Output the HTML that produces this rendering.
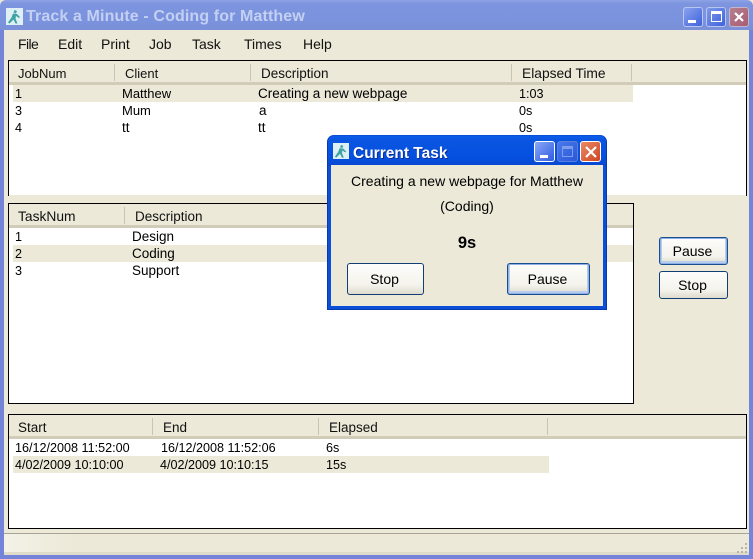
<!DOCTYPE html>
<html><head><meta charset="utf-8"><style>
html,body{margin:0;padding:0;background:#ece9d8;}
#p{position:relative;width:753px;height:559px;overflow:hidden;background:#ece9d8;font-family:"Liberation Sans",sans-serif;font-size:13.5px;color:#000;}
#p div{position:absolute;box-sizing:border-box;}
.t{white-space:nowrap;line-height:17px;height:17px;margin-top:1px;}
.t.n{font-size:12.6px;margin-top:2px;}
.h{white-space:nowrap;line-height:17px;height:17px;color:#111;margin-top:1px;}
.d{white-space:nowrap;line-height:17px;height:17px;font-size:14px;left:331px;width:272px;text-align:center;}
.m{white-space:nowrap;line-height:18px;top:35px;font-size:14px;color:#111;}
.box{background:#fff;border:1px solid #000;}
.hd{background:#ece9d8;left:0;top:0;height:24px;border-bottom:3px solid #d0ccb8;}
.sep{width:1px;top:3px;height:17px;background:#c8c5b4;border-right:0;}
.hl{background:#ece9d8;height:17px;}
.btn{background:linear-gradient(#fdfdfb,#f4f3ec 70%,#dedbcd);border:1px solid #0f3f73;border-radius:3px;text-align:center;font-size:14px;padding-right:2px;}
.def{box-shadow:inset 0 0 0 1px #8fb0e6,inset 0 -1px 0 2px #b8cdee;border-color:#1a4f8f;}
.tb{border-radius:3px;border:1px solid #fff;}
</style></head><body>
<div id="p">
<!-- main frame -->
<div style="left:0;top:0;width:753px;height:30px;background:linear-gradient(#8ea2e6 0,#7d95df 12%,#7b93de 60%,#7a90d8 100%);border-radius:6px 6px 0 0"></div>
<div style="left:0;top:30px;width:4px;height:529px;background:#7484d8"></div>
<div style="left:749px;top:30px;width:4px;height:529px;background:#7484d8"></div>
<div style="left:0;top:555px;width:753px;height:4px;background:#7484d8"></div>

<svg style="position:absolute;left:6px;top:8px" width="17" height="17" viewBox="0 0 17 17"><rect width="17" height="17" fill="#dff0f4"/><path d="M8.500 2l2.500 1-1 2.500-2.500-1zM7 5.500l4 .5 3 3-1 1-3-2-.5 2.500 2 5h-2l-2-4-4 4-1.500-1 3.500-5z" fill="#3fa3a6"/></svg>
<div style="left:26px;top:7px;font-size:16px;line-height:20px;font-weight:bold;color:#c4d0f2;white-space:nowrap;letter-spacing:.12px">Track a Minute - Coding for Matthew</div>

<!-- main title buttons -->
<div class="tb" style="left:683px;top:7px;width:20px;height:20px;background:linear-gradient(135deg,#8aa2ee,#3f62dc);border-color:#b8c6f0"><div style="left:4px;top:12px;width:8px;height:3px;background:#fff"></div></div>
<div class="tb" style="left:706px;top:7px;width:20px;height:20px;background:linear-gradient(135deg,#7f98ea,#3f62dc);border-color:#b8c6f0"><div style="left:4px;top:3px;width:11px;height:11px;border:1px solid #fff;border-top:3px solid #fff"></div></div>
<div class="tb" style="left:729px;top:7px;width:20px;height:20px;background:linear-gradient(135deg,#b5808e,#a85c74);border-color:#c8b4c8"><svg style="position:absolute;left:2px;top:2px" width="14" height="14"><path d="M3 3L11 11M11 3L3 11" stroke="#fff" stroke-width="2.200" fill="none"/></svg></div>

<!-- menu -->
<div class="m" style="left:18px;letter-spacing:-.6px">File</div>
<div class="m" style="left:58px">Edit</div>
<div class="m" style="left:101px">Print</div>
<div class="m" style="left:149px">Job</div>
<div class="m" style="left:192px">Task</div>
<div class="m" style="left:244px">Times</div>
<div class="m" style="left:303px">Help</div>

<!-- table 1 -->
<div class="box" style="left:8px;top:60px;width:739px;height:136px"></div>
<div class="hd" style="left:9px;top:61px;width:737px"></div>
<div class="sep" style="left:114px;top:64px"></div><div class="sep" style="left:250px;top:64px"></div><div class="sep" style="left:511px;top:64px"></div><div class="sep" style="left:631px;top:64px"></div>
<div class="h" style="left:18px;top:64px;font-size:13px">JobNum</div><div class="h" style="left:125px;top:64px;font-size:13px">Client</div><div class="h" style="left:261px;top:64px">Description</div><div class="h" style="left:522px;top:64px;font-size:13.800px">Elapsed Time</div>
<div class="hl" style="left:13px;top:85px;width:620px"></div>
<div class="t n" style="left:15px;top:84px">1</div><div class="t" style="left:122px;top:84px;font-size:13px">Matthew</div><div class="t" style="left:258px;top:84px">Creating a new webpage</div><div class="t n" style="left:519px;top:84px">1:03</div>
<div class="t n" style="left:15px;top:101px">3</div><div class="t" style="left:122px;top:101px;font-size:13px">Mum</div><div class="t" style="left:259px;top:101px">a</div><div class="t n" style="left:519px;top:101px">0s</div>
<div class="t n" style="left:15px;top:118px">4</div><div class="t" style="left:122px;top:118px">tt</div><div class="t" style="left:258px;top:118px">tt</div><div class="t n" style="left:519px;top:118px">0s</div>
<div style="left:9px;top:195px;width:737px;height:8px;background:#ece9d8"></div>

<!-- table 2 -->
<div class="box" style="left:8px;top:203px;width:626px;height:201px"></div>
<div class="hd" style="left:9px;top:204px;width:624px"></div>
<div class="sep" style="left:124px;top:207px"></div>
<div class="h" style="left:18px;top:207px;font-size:13.800px">TaskNum</div><div class="h" style="left:135px;top:207px">Description</div>
<div class="hl" style="left:13px;top:245px;width:620px"></div>
<div class="t n" style="left:15px;top:227px">1</div><div class="t" style="left:132px;top:227px">Design</div>
<div class="t n" style="left:15px;top:244px">2</div><div class="t" style="left:132px;top:244px">Coding</div>
<div class="t n" style="left:15px;top:261px">3</div><div class="t" style="left:132px;top:261px">Support</div>

<!-- side buttons -->
<div class="btn def" style="left:659px;top:237px;width:69px;height:28px;line-height:27px">Pause</div>
<div class="btn" style="left:659px;top:271px;width:69px;height:28px;line-height:27px">Stop</div>

<!-- table 3 -->
<div class="box" style="left:8px;top:414px;width:739px;height:115px"></div>
<div class="hd" style="left:9px;top:415px;width:737px"></div>
<div class="sep" style="left:152px;top:418px"></div><div class="sep" style="left:318px;top:418px"></div><div class="sep" style="left:547px;top:418px"></div>
<div class="h" style="left:18px;top:418px">Start</div><div class="h" style="left:163px;top:418px">End</div><div class="h" style="left:329px;top:418px">Elapsed</div>
<div class="hl" style="left:13px;top:456px;width:536px"></div>
<div class="t n" style="left:15px;top:438px">16/12/2008 11:52:00</div><div class="t n" style="left:161px;top:438px">16/12/2008 11:52:06</div><div class="t n" style="left:326px;top:438px">6s</div>
<div class="t n" style="left:15px;top:455px">4/02/2009 10:10:00</div><div class="t n" style="left:160px;top:455px">4/02/2009 10:10:15</div><div class="t n" style="left:326px;top:455px">15s</div>

<!-- status bar -->
<div style="left:4px;top:533px;width:745px;height:22px;background:linear-gradient(90deg,#f4f2e8,#ece9d8 70px);border-top:1px solid #a8a594"></div>
<div style="left:4px;top:552px;width:745px;height:3px;background:#dedbca"></div>
<svg style="position:absolute;left:737px;top:542px" width="12" height="12" fill="#b8b5a4"><rect x="8" y="1" width="2" height="2"/><rect x="4" y="5" width="2" height="2"/><rect x="8" y="5" width="2" height="2"/><rect x="0" y="9" width="2" height="2"/><rect x="4" y="9" width="2" height="2"/><rect x="8" y="9" width="2" height="2"/></svg>

<!-- dialog -->
<div style="left:327px;top:135px;width:280px;height:175px;background:#0a4fd8;border-radius:7px 7px 0 0;border:1px solid #0838b0;border-top:0"></div>
<div style="left:328px;top:136px;width:278px;height:30px;background:linear-gradient(#0a5ce8 0,#0a55e0 15%,#0550e0 70%,#0a48d0);border-radius:6px 6px 0 0"></div>
<div style="left:331px;top:165px;width:272px;height:141px;background:#ece9d8"></div>
<svg style="position:absolute;left:333px;top:143px" width="16" height="16" viewBox="0 0 17 17"><rect width="17" height="17" fill="#dff0f4"/><path d="M8.500 2l2.500 1-1 2.500-2.500-1zM7 5.500l4 .5 3 3-1 1-3-2-.5 2.500 2 5h-2l-2-4-4 4-1.500-1 3.500-5z" fill="#3fa3a6"/></svg>
<div style="left:353px;top:144px;font-size:15.500px;line-height:20px;font-weight:bold;color:#fff;white-space:nowrap;text-shadow:1px 1px 0 #0a2f9a">Current Task</div>
<div class="tb" style="left:534px;top:141px;width:21px;height:21px;background:linear-gradient(135deg,#8aa8f8,#2f5ce0)"><div style="left:5px;top:13px;width:8px;height:3px;background:#fff"></div></div>
<div class="tb" style="left:557px;top:141px;width:21px;height:21px;background:linear-gradient(135deg,#4a78ea,#2a58d8);border-color:#5a80e0"><div style="left:4px;top:4px;width:11px;height:11px;border:1px solid #7e9cec;border-top:3px solid #7e9cec"></div></div>
<div class="tb" style="left:580px;top:141px;width:21px;height:21px;background:linear-gradient(135deg,#ea8a68,#cf4420)"><svg style="position:absolute;left:3px;top:3px" width="14" height="14"><path d="M2 2L12 12M12 2L2 12" stroke="#fff" stroke-width="2.200" fill="none"/></svg></div>
<div class="d" style="top:173px">Creating a new webpage for Matthew</div>
<div class="d" style="top:198px">(Coding)</div>
<div class="d" style="top:235px;font-weight:bold;font-size:16.500px">9s</div>
<div class="btn" style="left:347px;top:263px;width:77px;height:32px;line-height:31px">Stop</div>
<div class="btn def" style="left:507px;top:263px;width:83px;height:32px;line-height:31px">Pause</div>
</div>
</body></html>
